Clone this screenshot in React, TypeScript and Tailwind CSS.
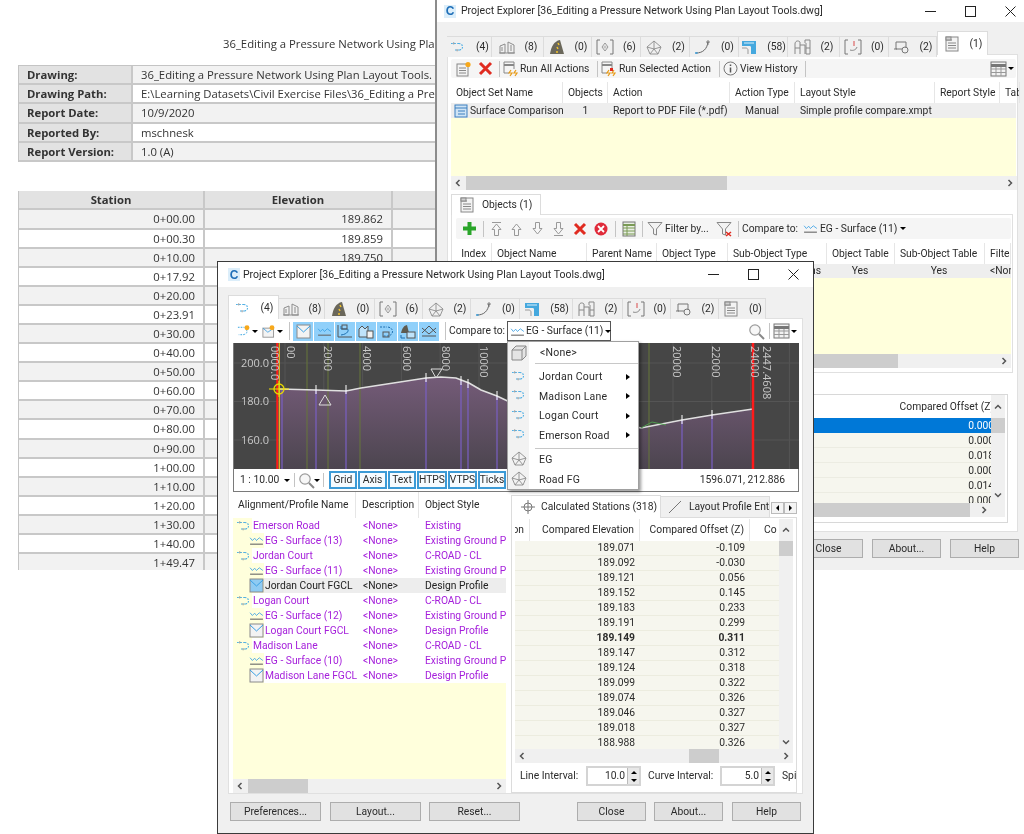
import React from "react";

const sans = "font-['Roboto','Open_Sans',sans-serif]";

/* ---------- icons ---------- */
const Svg = ({ w = 16, h = 16, vw, vh, children, className }: { w?: number; h?: number; vw?: number; vh?: number; children: React.ReactNode; className?: string }) => (
  <svg width={w} height={h} viewBox={`0 0 ${vw || w} ${vh || h}`} fill="none" className={"shrink-0 " + (className || "")}>{children}</svg>
);
const AlignI = () => (
  <Svg w={16} h={12} vw={18} vh={14}>
    <path d="M1 3H10" stroke="#3aa6e2" strokeWidth="1.2" strokeDasharray="1.800 1.800" />
    <path d="M10 3C15 3 16 9 11 10.500" stroke="#3aa6e2" strokeWidth="1.200" strokeDasharray="1.800 1.500" />
    <path d="M11 10.500H4" stroke="#3aa6e2" strokeWidth="1.200" strokeDasharray="1.800 1.800" />
    <path d="M4 1.500V4M8 9.500V12" stroke="#777" strokeWidth="0.900" />
  </Svg>
);
const SitesI = () => (
  <Svg w={18} h={16}>
    <path d="M2 14V7L7 5V14ZM10 14V3L16 6V14ZM1 14H17M4 8V12M13 6V12" stroke="#8c8c8c" strokeWidth="1" />
  </Svg>
);
const RoadI = () => (
  <Svg w={16} h={16}>
    <path d="M1 15C2 8 5 2 11 1L15 15Z" fill="#6a675a" />
    <path d="M9 4L10 6M8 8L9 10M8 12L8 14" stroke="#f2c22a" strokeWidth="1.500" />
  </Svg>
);
const PointsI = () => (
  <Svg w={18} h={16}>
    <path d="M4 1H1V15H4M14 1H17V15H14" stroke="#777" strokeWidth="1" />
    <path d="M9 4L12 8L9 12L6 8Z" stroke="#999" />
    <circle cx="9" cy="8" r="1.600" fill="#c4c4c4" />
  </Svg>
);
const SurfI = ({ c = "#8c8c8c" }: { c?: string }) => (
  <Svg w={16} h={15}>
    <path d="M8 1L15 7L12 14H4L1 7ZM1 7L8 9L15 7M8 1L8 9M4 14L8 9L12 14" stroke={c} strokeWidth="0.900" />
  </Svg>
);
const CurveI = () => (
  <Svg w={18} h={16}>
    <path d="M2 14C9 14 13 10 14 3" stroke="#666" strokeWidth="1" />
    <path d="M14 1V6M12 3H16" stroke="#666" strokeWidth="0.800" />
    <path d="M1 14H4M2 13V15" stroke="#3d9bd6" strokeWidth="1" />
  </Svg>
);
const PipeI = () => (
  <Svg w={16} h={15}>
    <path d="M1 1H15V14H10V7C10 6 9 6 8 6H1Z" fill="#45a8de" />
    <path d="M3 3H13" stroke="#a9d8f2" strokeWidth="1.500" />
    <path d="M1 8H5C6 8 7 9 7 10V14" stroke="#999" strokeWidth="1" />
  </Svg>
);
const NetI = () => (
  <Svg w={18} h={16}>
    <path d="M1 15V5C1 2 4 1 6 3V15M6 6H11V15M11 4V1H16V15H12V4" stroke="#888" strokeWidth="1" />
    <path d="M1 9H6M12 9H16" stroke="#888" strokeWidth="1" />
  </Svg>
);
const PressI = () => (
  <Svg w={18} h={16}>
    <path d="M4 1H1V15H4M14 1H17V15H14" stroke="#777" strokeWidth="1" />
    <path d="M10 2V7" stroke="#d94a4a" strokeWidth="1" />
    <path d="M6 11C9 12 12 11 13 8" stroke="#888" strokeWidth="1" />
  </Svg>
);
const SampleI = () => (
  <Svg w={16} h={14}>
    <path d="M2 2H12V8M2 2V9H8" stroke="#777" strokeWidth="1" />
    <circle cx="11" cy="10" r="3" stroke="#777" />
    <path d="M0 9H3" stroke="#777" />
  </Svg>
);
const DocI = () => (
  <Svg w={14} h={16}>
    <rect x="1" y="1" width="12" height="14" fill="#f3f3f3" stroke="#888" />
    <path d="M1 4H7M3 7H11M3 9.500H11M3 12H11" stroke="#888" />
    <rect x="1" y="1" width="5" height="3" fill="#cfcfcf" stroke="#888" />
  </Svg>
);
const EgI = () => (
  <Svg w={15} h={11} vw={16} vh={12}>
    <path d="M1 3L3.500 6L6 3.500L8 6L11 3L15 6" stroke="#3aa0e4" strokeWidth="0.900" />
    <path d="M1 10H15" stroke="#666" strokeWidth="1.200" />
  </Svg>
);
const DesignI = ({ active }: { active?: boolean }) => (
  <Svg w={15} h={15}>
    <rect x="1" y="1" width="13" height="13" fill={active ? "#8fcbf2" : "#f3f3f3"} stroke="#8a8a8a" />
    <path d="M1 2L7.500 8L14 2" stroke="#3aa0e4" strokeWidth="1" />
  </Svg>
);
const Caret0 = () => <span className="block w-0 h-0 border-x-[3px] border-x-transparent border-t-[3px] border-t-black shrink-0" />;
const XRed = ({ s = 15 }: { s?: number }) => (
  <Svg w={s} h={s}>
    <path d={`M2 2L${s - 2} ${s - 2}M${s - 2} 2L2 ${s - 2}`} stroke="#e02b20" strokeWidth="3" />
  </Svg>
);
const Sep = ({ h = "h-[16px]" }: { h?: string }) => <span className={"block w-px bg-[#c4c4c4] mx-[3px] shrink-0 " + h} />;
const Lens = () => (
  <Svg w={17} h={17}>
    <circle cx="7" cy="7" r="5.200" fill="#f7f7f7" stroke="#9a9a9a" strokeWidth="1.200" />
    <path d="M11 11L16 16" stroke="#888" strokeWidth="2" />
  </Svg>
);
const GridI = () => (
  <Svg w={17} h={16}>
    <rect x="1" y="1" width="15" height="14" fill="#f2f2f2" stroke="#777" />
    <path d="M1 4.500H16" stroke="#777" strokeWidth="3" />
    <path d="M1 8H16M1 11.500H16M6 6V15M11 6V15" stroke="#999" />
  </Svg>
);
const CLogo = () => (
  <span className="w-[12px] h-[13px] bg-[#dceefa] flex items-center justify-center shrink-0 text-[#1f6fb8] font-bold text-[12px] leading-none font-['Liberation_Sans',sans-serif]">C</span>
);
const ArrowUpI = ({ d, bar }: { d?: boolean; bar?: boolean }) => (
  <Svg w={15} h={16} className={d ? "rotate-180" : ""}>
    {bar && <path d="M3 1.500H12" stroke="#999" />}
    <path d="M7.500 3L12 8.500H9.500V14.500H5.500V8.500H3Z" stroke="#999" strokeWidth="1" fill="#f6f6f6" />
  </Svg>
);
const FilterI = ({ x }: { x?: boolean }) => (
  <Svg w={16} h={16}>
    <path d="M1 1.500H15L9.500 8V14L6.500 13V8Z" stroke="#888" fill="#f2f2f2" />
    {x && <path d="M10 11L15 15M15 11L10 15" stroke="#e02b20" strokeWidth="1.600" />}
  </Svg>
);
const RunI = ({ bolts }: { bolts?: boolean }) => (
  <Svg w={16} h={17}>
    <path d="M1 2H11V9M1 2V13H6" stroke="#888" />
    <path d="M1 5H11" stroke="#888" strokeWidth="2" />
    <path d="M8 10L6 13H9L7 16M13 10L11 13H14L12 16" stroke="#e79a16" strokeWidth="1.200" />
    {!bolts && <rect x="9" y="8" width="3" height="3" fill="#e02b20" />}
  </Svg>
);
const Info = () => (
  <Svg w={15} h={15}>
    <circle cx="7.500" cy="7.500" r="6.500" stroke="#777" />
    <path d="M7.500 6.500V11.500M7.500 3.500V5" stroke="#555" strokeWidth="1.500" />
  </Svg>
);
const NewSetI = () => (
  <Svg w={16} h={16}>
    <rect x="1" y="3" width="11" height="12" fill="#f3f3f3" stroke="#888" />
    <path d="M3 7H10M3 9.500H10M3 12H10" stroke="#888" />
    <circle cx="12" cy="3.500" r="2.600" fill="#f7a81b" />
  </Svg>
);
const Plus = () => (
  <Svg w={15} h={15}>
    <path d="M7.500 1V14M1 7.500H14" stroke="#2aa52a" strokeWidth="4" />
  </Svg>
);
const CircX = () => (
  <Svg w={14} h={14}>
    <circle cx="7" cy="7" r="6.500" fill="#e02b3a" />
    <path d="M4 4L10 10M10 4L4 10" stroke="#fff" strokeWidth="1.800" />
  </Svg>
);
const TableI = () => (
  <Svg w={14} h={16}>
    <rect x="1" y="1" width="12" height="14" fill="#e9efe4" stroke="#777" />
    <path d="M1 4H13" stroke="#7a9a55" strokeWidth="2" />
    <path d="M1 7H13M1 10H13M1 13H13M5 5V15" stroke="#7a9a55" />
  </Svg>
);
const Cube = () => (
  <Svg w={16} h={16}>
    <path d="M1 5L5 1H15V11L11 15H1Z" fill="#e4e4e4" stroke="#888" />
    <path d="M1 5H11V15M11 5L15 1" stroke="#888" />
  </Svg>
);
const Sun = ({ blue }: { blue?: boolean }) => (
  <Svg w={15} h={14} vw={18} vh={17}>
    {blue ? (
      <path d="M1 4H9M11 7C14 10 10 13 7 13H2" stroke="#3aa6e2" strokeWidth="1.200" strokeDasharray="2 1.400" />
    ) : (
      <>
        <rect x="1" y="5" width="13" height="11" fill="#f3f3f3" stroke="#888" />
        <path d="M1 5L7 10L14 5" stroke="#3aa0e4" />
      </>
    )}
    <circle cx="12" cy="4.500" r="3" fill="#f7a81b" />
  </Svg>
);
const ToolToggle = ({ children }: { children: React.ReactNode }) => (
  <span className="w-[20px] h-[19px] bg-[#90d0fa] flex items-center justify-center mr-[1px] shrink-0">{children}</span>
);
const Chev = ({ dir }: { dir: "l" | "r" | "u" | "d" }) => (
  <svg width="8" height="8" viewBox="0 0 8 8" className="shrink-0">
    <path d={dir === "l" ? "M5.500 1L2.500 4L5.500 7" : dir === "r" ? "M2.500 1L5.500 4L2.500 7" : dir === "u" ? "M1 5.500L4 2.500L7 5.500" : "M1 2.500L4 5.500L7 2.500"} fill="none" stroke="#555" strokeWidth="1.500" />
  </svg>
);

/* ---------- generic pieces ---------- */
const Tab = ({ icon, n, w, active }: { icon: React.ReactNode; n: string; w: number; active?: boolean }) => (
  <div
    style={{ width: w }}
    className={
      "flex items-center justify-center gap-[9px] border-r border-[#dcdcdc] " +
      (active ? "h-[24px] -mt-[3px] bg-white relative z-10 border-t border-l" : "h-[21px] bg-[#f0f0f0] border-t border-[#dcdcdc]")
    }
  >
    <span className="flex w-[18px] justify-center">{icon}</span>
    <span>{n}</span>
  </div>
);
const Btn = ({ w, children }: { w: number; children: React.ReactNode }) => (
  <div style={{ width: w }} className="h-[19px] bg-[#e1e1e1] border border-[#adadad] flex items-center justify-center shrink-0">
    {children}
  </div>
);
const Head = ({ w, children, right }: { w: number; children: React.ReactNode; right?: boolean }) => (
  <div style={{ width: w }} className={"shrink-0 h-full flex items-center border-r border-[#e6e6e6] whitespace-nowrap overflow-hidden px-[5px] " + (right ? "justify-end" : "")}>
    {children}
  </div>
);
const HBar = ({ left, thumb, w }: { left: number; thumb: number; w: number }) => (
  <div style={{ width: w }} className="h-[14px] bg-[#f0f0f0] flex items-center relative shrink-0">
    <span className="absolute left-[3px] top-[3px] flex"><Chev dir="l" /></span>
    <span style={{ marginLeft: left, width: thumb }} className="h-[14px] bg-[#cdcdcd]" />
    <span className="absolute right-[3px] top-[3px] flex"><Chev dir="r" /></span>
  </div>
);
const Spin = ({ v }: { v: string }) => (
  <div className="w-[55px] h-[20px] border-2 border-[#d4d4d4] bg-white flex items-center justify-end shrink-0">
    <span className="pr-[2px]">{v}</span>
    <div className="w-[12px] h-full flex flex-col bg-[#e8e8e8] border-l border-[#bbb] items-center justify-around">
      <span className="w-0 h-0 border-x-[3px] border-x-transparent border-b-[3px] border-b-black" />
      <span className="w-0 h-0 border-x-[3px] border-x-transparent border-t-[3px] border-t-black" />
    </div>
  </div>
);
const WinCtl = ({ gap }: { gap: string }) => (
  <div className={"flex items-center ml-auto " + gap}>
    <svg width="11" height="11" viewBox="0 0 11 11"><path d="M0 5.500H11" stroke="#222" /></svg>
    <svg width="11" height="11" viewBox="0 0 11 11"><rect x="0.500" y="0.500" width="10" height="10" fill="none" stroke="#222" /></svg>
    <svg width="11" height="11" viewBox="0 0 11 11"><path d="M0.500 0.500L10.500 10.500M10.500 0.500L0.500 10.500" stroke="#222" /></svg>
  </div>
);

/* ---------- background report ---------- */
const meta = [
  ["Drawing:", "36_Editing a Pressure Network Using Plan Layout Tools."],
  ["Drawing Path:", "E:\\Learning Datasets\\Civil Exercise Files\\36_Editing a Pressure"],
  ["Report Date:", "10/9/2020"],
  ["Reported By:", "mschnesk"],
  ["Report Version:", "1.0 (A)"],
];
const stations = ["0+00.00", "0+00.30", "0+10.00", "0+17.92", "0+20.00", "0+23.91", "0+30.00", "0+40.00", "0+50.00", "0+60.00", "0+70.00", "0+80.00", "0+90.00", "1+00.00", "1+10.00", "1+20.00", "1+30.00", "1+40.00", "1+49.47"];
const elev = ["189.862", "189.859", "189.750"];

const Report = () => (
  <div className="h-[570px] overflow-hidden pt-[36px] text-[11.300px] text-[#333] bg-white font-['Open_Sans',sans-serif]">
    <div className="pl-[223px] h-[16px] leading-[16px] whitespace-nowrap">36_Editing a Pressure Network Using Plan</div>
    <div className="ml-[18px] mt-[13px] w-[700px] border-t border-l border-[#c4c4c4]">
      {meta.map((m, i) => (
        <div key={m[0]} className="flex h-[19.200px] border-b-2 border-[#c8c8c8]">
          <div className="w-[114px] bg-[#e2e2e2] font-bold pl-[8px] leading-[17px] border-r-2 border-[#c8c8c8]">{m[0]}</div>
          <div className={"flex-1 pl-[8px] leading-[17px] whitespace-nowrap " + (i % 2 === 0 ? "bg-[#f2f2f2]" : "bg-white")}>{m[1]}</div>
        </div>
      ))}
    </div>
    <div className="ml-[18px] mt-[29px] w-[700px] border-l border-[#c4c4c4]">
      <div className="flex h-[19.500px] bg-[#e2e2e2] font-bold border-b-2 border-[#c8c8c8] leading-[18px] text-center">
        <div className="w-[186px] border-r-2 border-[#c8c8c8]">Station</div>
        <div className="w-[188px] border-r-2 border-[#c8c8c8]">Elevation</div>
      </div>
      {stations.map((s, i) => (
        <div key={s} className={"flex h-[19.100px] border-b-2 border-[#c8c8c8] leading-[17px] text-right " + (i % 2 === 0 ? "bg-[#f2f2f2]" : "bg-white")}>
          <div className="w-[186px] pr-[8px] border-r-2 border-[#c8c8c8]">{s}</div>
          <div className="w-[188px] pr-[8px] border-r-2 border-[#c8c8c8]">{elev[i] || ""}</div>
        </div>
      ))}
    </div>
  </div>
);

/* ---------- back window ---------- */
const BackWindow = () => (
  <div className={"absolute left-[435px] top-0 w-[589px] h-[570px] bg-[#f0f0f0] border-l-2 border-[#8c8c8c] text-[10.300px] text-[#2b2b2b] " + sans}>
    <div className="h-[22px] bg-white flex items-center pl-[7px] pr-[8px]">
      <CLogo />
      <span className="ml-[5px] text-[10.500px] whitespace-nowrap">Project Explorer [36_Editing a Pressure Network Using Plan Layout Tools.dwg]</span>
      <WinCtl gap="gap-[29px]" />
    </div>
    <div className="flex ml-[10px] mt-[14px] h-[18px]">
      <Tab w={45} n="(4)" icon={<AlignI />} />
      <Tab w={52} n="(8)" icon={<SitesI />} />
      <Tab w={48} n="(0)" icon={<RoadI />} />
      <Tab w={49} n="(6)" icon={<PointsI />} />
      <Tab w={49} n="(2)" icon={<SurfI />} />
      <Tab w={49} n="(0)" icon={<CurveI />} />
      <Tab w={49} n="(58)" icon={<PipeI />} />
      <Tab w={52} n="(2)" icon={<NetI />} />
      <Tab w={49} n="(0)" icon={<PressI />} />
      <Tab w={48} n="(2)" icon={<SampleI />} />
      <div className="-mt-[2px]"><Tab w={51} n="(1)" icon={<DocI />} active /></div>
    </div>
    <div className="ml-[10px] w-[571px] h-[478px] bg-white border border-[#e0e0e0] pl-[3px] pr-[1px] pt-[4px]">
      <div className="h-[19px] bg-[#f5f5f5] flex items-center pl-[5px] rounded-[2px] whitespace-nowrap">
        <NewSetI />
        <span className="ml-[6px] flex"><XRed /></span>
        <span className="ml-[3px] flex"><Sep /></span>
        <RunI bolts />
        <span className="ml-[1px] w-[69px]">Run All Actions</span>
        <span className="ml-[5px] flex"><Sep /></span>
        <RunI />
        <span className="ml-[2px] w-[91px]">Run Selected Action</span>
        <span className="ml-[6px] flex"><Sep /></span>
        <Info />
        <span className="ml-[2px] w-[57px]">View History</span>
        <span className="ml-[5px] flex"><Sep /></span>
        <span className="ml-auto flex items-center mr-[2px] gap-[1px]"><GridI /><Caret0 /></span>
      </div>
      <div className="flex h-[21px] mt-[4px] whitespace-nowrap">
        <Head w={112}>Object Set Name</Head>
        <Head w={45}>Objects</Head>
        <Head w={122}>Action</Head>
        <Head w={65}>Action Type</Head>
        <Head w={140}>Layout Style</Head>
        <Head w={65}>Report Style</Head>
        <Head w={20}>Table</Head>
      </div>
      <div className="flex h-[15px] bg-[#eeeeee] items-center whitespace-nowrap">
        <div className="w-[112px] flex items-center pl-[3px] gap-[1px]"><Svg w={15} h={14}><rect x="1" y="1" width="12" height="12" fill="#cfe4f5" stroke="#3b7fbf" /><path d="M1 4H13M4 7H11M4 10H11" stroke="#3b7fbf" /></Svg>Surface Comparison</div>
        <div className="w-[45px] text-center">1</div>
        <div className="w-[122px] pl-[5px]">Report to PDF File (*.pdf)</div>
        <div className="w-[65px] pl-[15px]">Manual</div>
        <div className="pl-[5px]">Simple profile compare.xmpt</div>
      </div>
      <div className="h-[58px] bg-[#ffffdc]" />
      <HBar w={566} left={15} thumb={261} />
      <div className="w-[90px] h-[21px] mt-[4px] bg-white border border-[#dcdcdc] border-b-0 flex items-center pl-[8px] gap-[8px] relative z-10">
        <DocI /><span>Objects (1)</span>
      </div>
      <div className="w-[562px] h-[159px] -mt-px border border-[#e0e0e0] pl-[4px] pt-[3px]">
        <div className="w-[555px] h-[21px] bg-[#f5f5f5] flex items-center pl-[6px] rounded-[2px] whitespace-nowrap">
          <Plus />
          <span className="ml-[3px] flex"><Sep /></span>
          <span className="ml-[2px] flex"><ArrowUpI bar /></span>
          <span className="ml-[5px] flex"><ArrowUpI /></span>
          <span className="ml-[6px] flex"><ArrowUpI d /></span>
          <span className="ml-[6px] flex"><ArrowUpI d bar /></span>
          <span className="ml-[7px] flex"><XRed s={14} /></span>
          <span className="ml-[7px] flex"><CircX /></span>
          <span className="ml-[4px] flex"><Sep /></span>
          <span className="ml-[3px] flex"><TableI /></span>
          <span className="ml-[3px] flex"><Sep /></span>
          <span className="ml-[1px] flex"><FilterI /></span>
          <span className="ml-[2px] w-[44px]">Filter by...</span>
          <span className="ml-[7px] flex"><FilterI x /></span>
          <span className="ml-[3px] flex"><Sep /></span>
          <span className="w-[55px]">Compare to:</span>
          <span className="ml-[6px] flex"><EgI /></span>
          <span className="ml-[2px] w-[73px]">EG - Surface (11)</span>
          <span className="ml-[7px] flex"><Caret0 /></span>
        </div>
        <div className="flex h-[21px] mt-[4px] whitespace-nowrap">
          <Head w={36} right>Index</Head>
          <Head w={95}>Object Name</Head>
          <Head w={70}>Parent Name</Head>
          <Head w={71}>Object Type</Head>
          <Head w={99}>Sub-Object Type</Head>
          <Head w={68}>Object Table</Head>
          <Head w={90}>Sub-Object Table</Head>
          <Head w={26}>Filter</Head>
        </div>
        <div className="flex h-[14px] bg-[#eeeeee] items-center whitespace-nowrap w-[555px] overflow-hidden">
          <div className="w-[370px] text-right pr-[5px] shrink-0">ns</div>
          <div className="w-[68px] text-center shrink-0">Yes</div>
          <div className="w-[90px] text-center shrink-0">Yes</div>
          <div className="pl-[6px]">&lt;None&gt;</div>
        </div>
        <div className="h-[76px] w-[555px] bg-[#ffffdc]" />
        <HBar w={555} left={0} thumb={442} />
      </div>
      <div className="w-[553px] h-[129px] mt-[21px] ml-[4px] border border-[#d8d8d8] flex">
        <div className="w-[535px] shrink-0 overflow-hidden">
          <div className="w-[538px]">
            <div className="h-[23px] pt-[5px] text-right whitespace-nowrap leading-[14px]">Compared Offset (Z)</div>
            <div className="h-[85px] overflow-hidden">
              {["0.000", "0.000", "0.018", "0.000", "0.014", "0.000"].map((v, i) => (
                <div key={i} className={"h-[15px] leading-[15px] text-right " + (i === 0 ? "bg-[#0078d7] text-white" : "bg-[#f6f6ee] border-b border-[#ecece2]")}>{v}</div>
              ))}
            </div>
          </div>
          <HBar w={535} left={0} thumb={514} />
        </div>
        <div className="w-[14px] h-[122px] shrink-0 bg-[#f0f0f0] flex flex-col items-center">
          <div className="h-[23px] flex items-center"><Chev dir="u" /></div>
          <div className="h-[15px] w-full bg-[#cdcdcd]" />
          <div className="h-[70px] flex items-end pb-[4px]"><Chev dir="d" /></div>
        </div>
      </div>
    </div>
    <div className="flex justify-end gap-[9px] pr-[5px] mt-[7px]">
      <Btn w={69}>Close</Btn>
      <Btn w={69}>About...</Btn>
      <Btn w={69}>Help</Btn>
    </div>
  </div>
);

/* ---------- chart ---------- */
const CH = 126;
const curve: [number, number][] = [[45, 46], [82, 47], [112, 48], [127, 45], [192, 35], [207, 34], [222, 35], [235, 40], [247, 47], [263, 53], [280, 61], [320, 68], [360, 74], [407, 85], [448, 77], [478, 72], [519, 66]];
const purple: [number, number][] = [[48, 46], [82, 47], [112, 47], [192, 35], [227, 38], [234, 41], [263, 53], [448, 77], [478, 72]];
const Chart = () => {
  const line = curve.map((p) => p.join(",")).join(" ");
  const grid = Array.from({ length: 15 }, (_, i) => 51 + i * 38.8);
  const labels: [number, string][] = [[37, "0000.0"], [53, "00"], [90, "2000"], [129, "4000"], [169, "6000"], [208, "8000"], [246, "10000"], [439, "20000"], [478, "22000"], [517, "24000"], [529, "2447.4608"]];
  return (
    <svg width="565" height={CH} viewBox={`0 0 565 ${CH}`} className="block">
      <defs>
        <linearGradient id="pf" x1="0" y1="0" x2="0" y2="1">
          <stop offset="0" stopColor="#745b78" />
          <stop offset="1" stopColor="#4c454f" />
        </linearGradient>
      </defs>
      <rect width="565" height={CH} fill="#464646" />
      {grid.map((x) => <path key={x} d={`M${x} 0V${CH}`} stroke="#555" />)}
      <path d="M0 20H565M0 58.500H565M0 97H565" stroke="#555" />
      <polygon points={`45,${CH} ${line} 519,${CH}`} fill="url(#pf)" />
      {[73, 94, 126, 415].map((x) => <path key={x} d={`M${x} 0V${CH}`} stroke="#66763a" />)}
      {purple.map(([x, y]) => <path key={x} d={`M${x} ${y}V${CH}`} stroke="#7a5fc4" strokeWidth="1.200" />)}
      <polyline points={line} fill="none" stroke="#e0e0e0" strokeWidth="1.600" />
      <path d="M407 85L418 79L432 82" stroke="#4f9a4f" fill="none" />
      {purple.slice(1).map(([x, y]) => <path key={x} d={`M${x} ${y - 5}v9`} stroke="#fff" />)}
      <path d="M519 61v9" stroke="#fff" />
      <path d="M85 62L91 52L97 62Z M197 26L202 35L208 26Z" stroke="#ddd" fill="none" />
      <path d="M43.250 0V126" stroke="#ff1a1a" strokeWidth="2" />
      <path d="M45.250 0V126" stroke="#ffd21a" strokeWidth="1" />
      <path d="M519 0V126" stroke="#ff1a1a" strokeWidth="2.500" />
      <circle cx="45" cy="46" r="5" stroke="#e6d800" fill="none" strokeWidth="1.300" />
      <path d="M35 46H55M45 38V54" stroke="#f2e200" />
      {[["200.0", 24], ["180.0", 62], ["160.0", 101]].map(([t, y]) => (
        <text key={t as string} x="7" y={y as number} fill="#c8c8c8" fontSize="11" fontFamily="Open Sans">{t}</text>
      ))}
      {labels.map(([x, t]) => (
        <text key={t} transform={`translate(${x} 3) rotate(90)`} fill="#c8c8c8" fontSize="11" fontFamily="Open Sans">{t}</text>
      ))}
    </svg>
  );
};

/* ---------- front window ---------- */
const BlueBtn = ({ w, t }: { w: number; t: string }) => (
  <span style={{ width: w }} className="h-[18px] border-2 border-[#3c9ad6] bg-[#f6fbff] flex items-center justify-center mr-[1px] shrink-0">{t}</span>
);
type Row = { k: "a" | "e" | "d"; n: string; st: string; sel?: boolean };
const tree: Row[] = [
  { k: "a", n: "Emerson Road", st: "Existing" },
  { k: "e", n: "EG - Surface (13)", st: "Existing Ground Profile" },
  { k: "a", n: "Jordan Court", st: "C-ROAD - CL" },
  { k: "e", n: "EG - Surface (11)", st: "Existing Ground Profile" },
  { k: "d", n: "Jordan Court FGCL", st: "Design Profile", sel: true },
  { k: "a", n: "Logan Court", st: "C-ROAD - CL" },
  { k: "e", n: "EG - Surface (12)", st: "Existing Ground Profile" },
  { k: "d", n: "Logan Court FGCL", st: "Design Profile" },
  { k: "a", n: "Madison Lane", st: "C-ROAD - CL" },
  { k: "e", n: "EG - Surface (10)", st: "Existing Ground Profile" },
  { k: "d", n: "Madison Lane FGCL", st: "Design Profile" },
];
const ce = ["189.071", "189.092", "189.121", "189.152", "189.183", "189.191", "189.149", "189.147", "189.124", "189.099", "189.074", "189.046", "189.018", "188.988"];
const co = ["-0.109", "-0.030", "0.056", "0.145", "0.233", "0.299", "0.311", "0.312", "0.318", "0.322", "0.326", "0.327", "0.327", "0.326"];
const menuItems: { t: string; ic: "a" | "s"; arrow?: boolean; sepAfter?: boolean }[] = [
  { t: "Jordan Court", ic: "a", arrow: true },
  { t: "Madison Lane", ic: "a", arrow: true },
  { t: "Logan Court", ic: "a", arrow: true },
  { t: "Emerson Road", ic: "a", arrow: true, sepAfter: true },
  { t: "EG", ic: "s" },
  { t: "Road FG", ic: "s" },
];
const Menu = () => (
  <div className="absolute left-[289px] top-[79px] w-[132px] h-[149px] bg-white border border-[#a0a0a0] shadow-[2px_2px_3px_rgba(0,0,0,0.4)] z-20 flex text-[10.500px] tracking-[0.2px]">
    <div className="w-[21px] bg-[#f2f2f2] flex flex-col items-center pt-[1px]">
      <div className="h-[19px] flex items-center"><Cube /></div>
      <div className="h-[4px]" />
      {menuItems.map((m, i) => (
        <div key={m.t} className={"flex items-center h-[19.500px] " + (i === 4 ? "mt-[5px]" : "")}>
          {m.ic === "a" ? <AlignI /> : <SurfI />}
        </div>
      ))}
    </div>
    <div className="flex-1 pt-[1px]">
      <div className="h-[19px] leading-[19px] pl-[11px]">&lt;None&gt;</div>
      <div className="h-px bg-[#c8c8c8] ml-[6px] mt-[1px] mb-[3px]" />
      {menuItems.map((m) => (
        <React.Fragment key={m.t}>
          <div className="h-[19.500px] leading-[19px] pl-[10px] pr-[8px] flex items-center justify-between">
            {m.t}
            {m.arrow && <span className="w-0 h-0 border-y-[3.500px] border-y-transparent border-l-[4px] border-l-black" />}
          </div>
          {m.sepAfter && <div className="h-px bg-[#c8c8c8] ml-[6px] mt-[3px] mb-[1px]" />}
        </React.Fragment>
      ))}
    </div>
  </div>
);

const FrontWindow = () => (
  <div className={"absolute left-[217px] top-[261px] w-[597px] h-[573px] bg-[#f0f0f0] border border-[#3a3a3a] text-[10.300px] text-[#2b2b2b] overflow-hidden " + sans}>
    <div className="h-[25px] bg-white flex items-center pl-[10px] pr-[14px]">
      <CLogo />
      <span className="ml-[3px] text-[10.500px] whitespace-nowrap">Project Explorer [36_Editing a Pressure Network Using Plan Layout Tools.dwg]</span>
      <WinCtl gap="gap-[29px]" />
    </div>
    <div className="flex ml-[10px] mt-[11px] h-[21px]">
      <Tab w={51} n="(4)" icon={<AlignI />} active />
      <Tab w={46} n="(8)" icon={<SitesI />} />
      <Tab w={50} n="(0)" icon={<RoadI />} />
      <Tab w={48} n="(6)" icon={<PointsI />} />
      <Tab w={48} n="(2)" icon={<SurfI />} />
      <Tab w={49} n="(0)" icon={<CurveI />} />
      <Tab w={53} n="(58)" icon={<PipeI />} />
      <Tab w={50} n="(2)" icon={<NetI />} />
      <Tab w={48} n="(0)" icon={<PressI />} />
      <Tab w={48} n="(2)" icon={<SampleI />} />
      <Tab w={47} n="(0)" icon={<DocI />} />
    </div>
    <div className="ml-[10px] w-[575px] h-[476px] bg-white border border-[#e0e0e0] pt-[2px] pl-[4px] -mt-px">
      <div className="h-[20px] flex items-center pl-[4px] whitespace-nowrap">
        <Sun blue /><Caret0 />
        <span className="ml-[4px] flex"><Sun /></span><Caret0 />
        <span className="ml-[3px] flex"><Sep h="h-[18px]" /></span>
        <ToolToggle><DesignI /></ToolToggle>
        <ToolToggle><EgI /></ToolToggle>
        <ToolToggle><Svg w={16} h={14}><path d="M1 1V13H15" stroke="#555" /><path d="M4 2V5H10C12 5 12 10 4 11" stroke="#1d6fb0" /><rect x="5" y="1" width="5" height="4" stroke="#555" /></Svg></ToolToggle>
        <ToolToggle><Svg w={16} h={15}><path d="M1 5L4 2L7 5L10 2V13H1Z" stroke="#555" fill="#bfe3fb" /><rect x="9" y="7" width="6" height="7" fill="#f3f3f3" stroke="#555" /></Svg></ToolToggle>
        <ToolToggle><Svg w={16} h={15}><path d="M1 3H8M9 3C15 4 15 11 9 12H4" stroke="#1d6fb0" strokeDasharray="2 1.200" /><rect x="4" y="8" width="6" height="5" stroke="#555" /></Svg></ToolToggle>
        <ToolToggle><Svg w={16} h={15}><path d="M1 9C2 5 3 2 7 1L9 9Z" fill="#5e5b50" /><rect x="7" y="8" width="8" height="6" fill="#bfe3fb" stroke="#555" /><path d="M1 11V14H5" stroke="#1d6fb0" /></Svg></ToolToggle>
        <ToolToggle><Svg w={16} h={14}><path d="M1 9L8 2L15 9M1 4L8 10L15 4" stroke="#555" /><path d="M1 12H15" stroke="#555" /></Svg></ToolToggle>
        <span className="ml-[2px] flex"><Sep h="h-[18px]" /></span>
        <span className="w-[54px] shrink-0">Compare to:</span>
        <span className="ml-[4px] w-[104px] h-[20px] bg-white border border-[#555] flex items-center pl-[2px] shrink-0 relative z-30">
          <EgI /><span className="ml-[1px]">EG - Surface (11)</span><span className="ml-[2px] flex"><Caret0 /></span>
        </span>
        <span className="ml-auto flex items-center mr-[5px]">
          <Lens /><span className="ml-[1px] flex"><Sep h="h-[16px]" /></span><GridI /><span className="ml-[1px] flex"><Caret0 /></span>
        </span>
      </div>
      <div className="w-[566px] mt-[2px] border border-[#7a7a7a] border-t-0 h-[149px]">
        <Chart />
        <div className="h-[22px] bg-white flex items-center pl-[6px] whitespace-nowrap">
          <span className="w-[44px] shrink-0">1 : 10.00</span><Caret0 />
          <span className="ml-[1px] flex"><Sep h="h-[14px]" /></span>
          <Lens />
          <span className="-ml-[1px] flex"><Caret0 /></span>
          <span className="mr-[2px] flex"><Sep h="h-[14px]" /></span>
          <BlueBtn w={28} t="Grid" /><BlueBtn w={29} t="Axis" /><BlueBtn w={28} t="Text" /><BlueBtn w={30} t="HTPS" /><BlueBtn w={29} t="VTPS" /><BlueBtn w={28} t="Ticks" />
          <span className="ml-auto mr-[13px]">1596.071, 212.886</span>
        </div>
      </div>
      <div className="flex h-[301px]">
        <div className="w-[273px] shrink-0 h-full flex flex-col">
          <div className="flex h-[26px] shrink-0 whitespace-nowrap items-center">
            <div className="w-[123px] pl-[5px] h-full flex items-center border-r border-[#e6e6e6]">Alignment/Profile Name</div>
            <div className="w-[63px] pl-[6px] h-full flex items-center border-r border-[#e6e6e6]">Description</div>
            <div className="pl-[6px]">Object Style</div>
          </div>
          {tree.map((r) => (
            <div key={r.n} className={"flex h-[15px] items-center whitespace-nowrap overflow-hidden shrink-0 " + (r.sel ? "bg-[#ededed] text-[#222]" : "text-[#a51fdb]")}>
              <div className="w-[123px] flex items-center h-full shrink-0">
                <span className={"h-full flex items-center bg-[#ffffdc] shrink-0 " + (r.k === "a" ? "w-[19px] pl-[3px]" : "w-[31px] justify-end")}>
                  {r.k === "a" ? <AlignI /> : r.k === "e" ? <EgI /> : <DesignI active={r.sel} />}
                </span>
                <span className="pl-[1px]">{r.n}</span>
              </div>
              <div className="w-[63px] pl-[7px] shrink-0">&lt;None&gt;</div>
              <div className="pl-[6px] w-[87px] overflow-hidden shrink-0">{r.st}</div>
            </div>
          ))}
          <div className="flex-1 bg-[#ffffdc]" />
          <HBar w={273} left={15} thumb={60} />
        </div>
        <div className="w-[286px] ml-[5px] shrink-0 mt-[3px] h-[298px] flex flex-col">
          <div className="flex h-[22px] shrink-0 relative whitespace-nowrap">
            <div className="w-[150px] h-[23px] bg-white border border-b-0 border-[#dcdcdc] flex items-center pl-[9px] gap-[6px] z-10 shrink-0">
              <Svg w={14} h={14}><circle cx="7" cy="7" r="4" stroke="#777" /><path d="M7 0V14M0 7H14" stroke="#777" /></Svg>
              Calculated Stations (318)
            </div>
            <div className="w-[109px] h-[21px] mt-[1px] border-t border-r border-[#dcdcdc] bg-[#f0f0f0] flex items-center pl-[7px] gap-[7px] overflow-hidden shrink-0">
              <Svg w={14} h={14}><path d="M1 13L13 1" stroke="#777" /></Svg>
              Layout Profile Entities
            </div>
            <div className="absolute right-[0px] top-[7px] flex">
              <span className="w-[13px] h-[12px] border border-[#bbb] bg-[#f4f4f4] flex items-center justify-center"><span className="w-0 h-0 border-y-[3px] border-y-transparent border-r-[3px] border-r-black" /></span>
              <span className="w-[13px] h-[12px] border border-[#bbb] bg-[#f4f4f4] flex items-center justify-center"><span className="w-0 h-0 border-y-[3px] border-y-transparent border-l-[3px] border-l-black" /></span>
            </div>
          </div>
          <div className="flex-1 border border-[#dcdcdc] pl-[3px] pt-[1px] flex flex-col min-h-0">
            <div className="flex flex-1 min-h-0">
              <div className="w-[264px] shrink-0 flex flex-col overflow-hidden">
                <div className="flex h-[22px] shrink-0 whitespace-nowrap">
                  <Head w={15} right>on</Head>
                  <Head w={110} right>Compared Elevation</Head>
                  <Head w={110} right>Compared Offset (Z)</Head>
                  <div className="pl-[14px] h-full flex items-center">Co</div>
                </div>
                {ce.map((v, i) => (
                  <div key={i} className={"flex h-[15px] shrink-0 leading-[14px] bg-[#f6f6ee] border-b border-[#ececdf] text-right " + (i === 6 ? "font-bold" : "")}>
                    <div className="w-[15px]" />
                    <div className="w-[110px] pr-[5px]">{v}</div>
                    <div className="w-[110px] pr-[5px]">{co[i]}</div>
                  </div>
                ))}
              </div>
              <div className="w-[14px] shrink-0 bg-[#f0f0f0] flex flex-col items-center">
                <div className="h-[22px] flex items-center"><Chev dir="u" /></div>
                <div className="h-[15px] w-full bg-[#cdcdcd]" />
                <div className="flex-1 flex items-end pb-[3px]"><Chev dir="d" /></div>
              </div>
            </div>
            <HBar w={278} left={174} thumb={30} />
            <div className="flex items-center h-[29px] pb-[3px] shrink-0 pl-[5px] whitespace-nowrap overflow-hidden">
              <span className="w-[66px] shrink-0">Line Interval:</span>
              <Spin v="10.0" />
              <span className="ml-[7px] w-[72px] shrink-0">Curve Interval:</span>
              <Spin v="5.0" />
              <span className="ml-[7px]">Spi</span>
            </div>
          </div>
        </div>
      </div>
    </div>
    <div className="flex ml-[12px] mt-[8px] whitespace-nowrap">
      <Btn w={91}>Preferences...</Btn>
      <span className="ml-[9px] flex"><Btn w={91}>Layout...</Btn></span>
      <span className="ml-[8px] flex"><Btn w={91}>Reset...</Btn></span>
      <span className="ml-[57px] flex"><Btn w={69}>Close</Btn></span>
      <span className="ml-[8px] flex"><Btn w={69}>About...</Btn></span>
      <span className="ml-[9px] flex"><Btn w={69}>Help</Btn></span>
    </div>
    <Menu />
  </div>
);

export default function App() {
  return (
    <div className="relative w-[1024px] h-[834px] overflow-hidden bg-white blur-[0.3px]">
      <Report />
      <BackWindow />
      <FrontWindow />
    </div>
  );
}
